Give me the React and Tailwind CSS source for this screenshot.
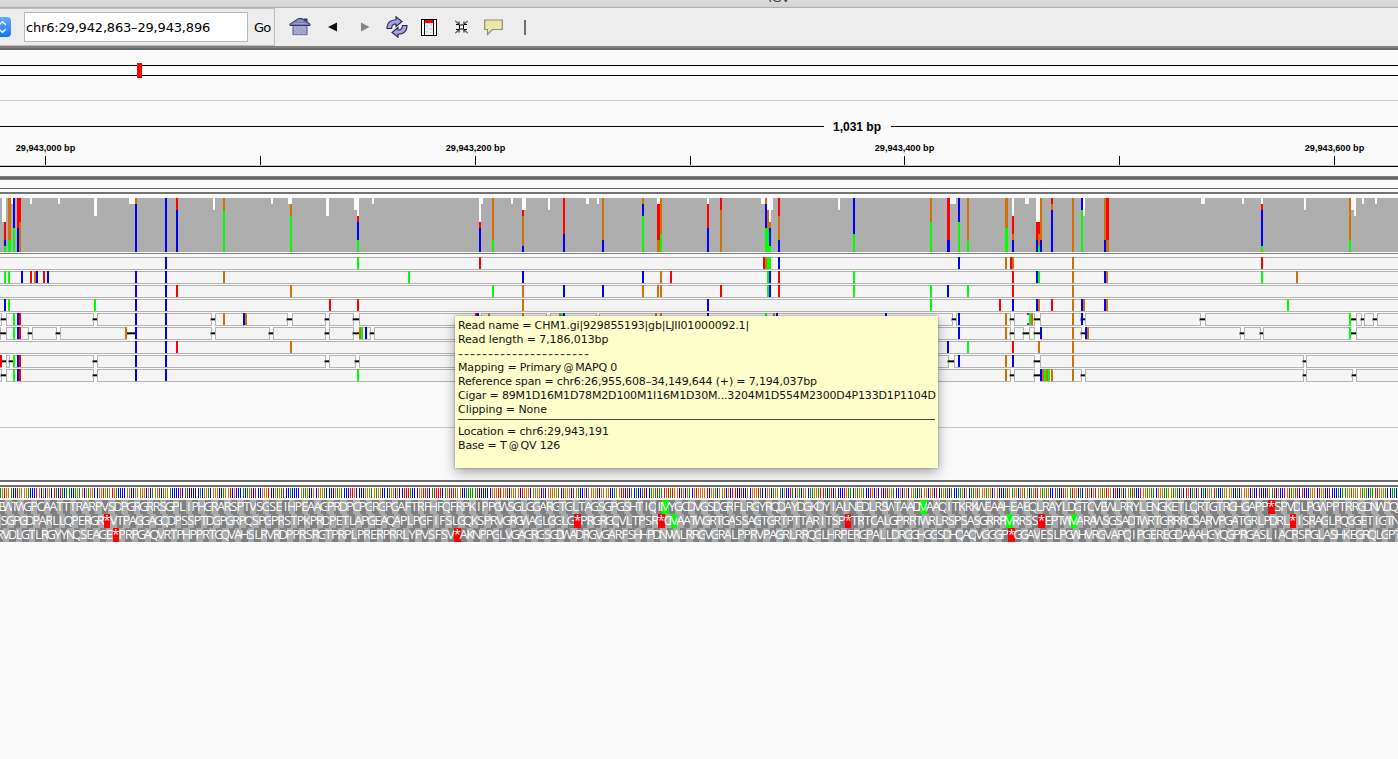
import React from "react";

const WIDTH = 1398;
const BP = 2.148;
const ORIGIN = -3.45;

const A = "#00ff00";
const C = "#0000ff";
const G = "#d17105";
const T = "#ff0000";
const BASE_COLORS = { A: "#009600", C: "#0000ff", G: "#d17105", T: "#ff0000" };

const SEQUENCE = [
  "CGAGTGGACCTGGGGACCCTGCGCGGCTACTACAACCAGAGCGAGGCCGGTGAGTGACCC",
  "CGGCCGGGGGCGCAGGTCAGGACCCCTCATCCCCCACGGACGGGCCAGGTCGCCCACAGT",
  "CTCCGGGTCCGAGATCCACCCCGAAGCCGCGGGACCCCGAGACCCTTGCCCCGGGAGAGG",
  "CCCAGGCGCCTTTACCCGGTTTCATTTTCAGTTTAGGCCAAAAATCCCCCCGGGTTGGTC",
  "GGGGCTGGGCGGGGCTCGGGGGACTGGGCTGACCGCGGGGTCGGGGCCAGGTTCTCACAC",
  "CATCCAGATAATGTATGGCTGCGACGTGGGGTCGGACGGGCGCTTCCTCCGCGGGTACCG",
  "GCAGGACGCCTACGACGGCAAGGATTACATCGCCCTGAACGAGGACCTGCGCTCTTGGAC",
  "CGCGGCGGACATGGCGGCTCAGATCACCAAGCGCAAGTGGGAGGCGGCCCATGAGGCGGA",
  "GCAGTTGAGAGCCTACCTGGATGGCACGTGCGTGGAGTGGCTCCGCAGATACCTGGAGAA",
  "CGGGAAGGAGACGCTGCAGCGCACGGGTACCAGGGGCCACGGGGCGCCTCCCTGATCGCC",
  "TGTAGATCTCCCGGGCTGGCCTCCCACAAGGAGGGGAGACAATTGGGACCAACACTAG",
].join("");

const CODON_ORDER = "TCAG";
const CODON_TABLE = "FFLLSSSSYY**CC*WLLLLPPPPHHQQRRRRIIIMTTTTNNKKSSRRVVVVAAAADDEEGGGG";

function translate(start) {
  const out = [];
  for (let k = start; k + 2 < SEQUENCE.length && ORIGIN + k * BP < WIDTH - 1; k += 3) {
    const [a, b, c] = [0, 1, 2].map((d) => CODON_ORDER.indexOf(SEQUENCE[k + d]));
    out.push(CODON_TABLE[a * 16 + b * 4 + c]);
  }
  return out;
}

// Gaps cut from the top of the coverage profile: [x, width, depth]
const DIPS = [
  [2, 4, 24], [11, 2, 6], [30, 2, 6], [58, 2, 6], [94, 3, 18], [129, 6, 6], [213, 2, 12], [271, 2, 6],
  [288, 4, 6], [326, 3, 18], [354, 3, 12], [357, 2, 18], [372, 2, 6], [479, 2, 24], [481, 2, 6],
  [511, 2, 6], [522, 4, 12], [548, 2, 12], [586, 3, 6], [597, 2, 6], [657, 3, 6], [707, 2, 6],
  [761, 4, 6], [767, 6, 12], [769, 2, 24], [838, 2, 12], [950, 6, 6], [1012, 2, 18], [1025, 4, 6],
  [1036, 4, 24], [1083, 2, 18], [1201, 4, 6], [1242, 2, 6], [1261, 2, 6], [1304, 2, 12],
  [1351, 3, 12], [1354, 2, 18], [1362, 2, 6], [1375, 2, 6],
];

// Stacked allele bars: [x, width, [from, to, colour], ...]
const STACKS = [
  [4, 2, [24, 42, T], [42, 48, C], [48, 54, A]],
  [8, 3, [0, 42, G], [42, 54, A]],
  [13, 2, [0, 30, C], [30, 54, A]],
  [17, 2, [0, 30, T], [30, 54, C]],
  [19, 2, [0, 24, T], [24, 54, G]],
  [135, 2, [0, 6, G], [6, 54, C]],
  [165, 2, [0, 54, C]],
  [176, 2, [0, 12, T], [12, 54, C]],
  [223, 2, [0, 12, G], [12, 54, A]],
  [290, 2, [6, 18, G], [18, 54, A]],
  [357, 2, [18, 24, T], [24, 42, C], [42, 54, A]],
  [479, 2, [24, 30, T], [30, 54, C]],
  [492, 2, [0, 42, G], [42, 54, A]],
  [522, 2, [12, 18, T], [18, 48, G], [48, 54, C]],
  [563, 2, [0, 36, T], [36, 54, C]],
  [602, 2, [0, 42, G], [42, 54, C]],
  [642, 2, [0, 6, G], [6, 18, C], [18, 54, A]],
  [657, 3, [6, 42, T], [42, 54, G]],
  [660, 2, [0, 36, G], [36, 54, A]],
  [707, 2, [6, 30, T], [30, 54, C]],
  [720, 2, [0, 12, T], [12, 54, G]],
  [765, 2, [0, 6, G], [6, 30, C], [30, 54, A]],
  [767, 2, [12, 30, G], [30, 54, A]],
  [769, 2, [24, 30, G], [30, 48, C], [48, 54, A]],
  [778, 2, [0, 18, T], [18, 42, G], [42, 54, C]],
  [853, 2, [0, 36, C], [36, 54, A]],
  [930, 2, [0, 24, G], [24, 54, A]],
  [947, 3, [0, 42, T], [42, 54, C]],
  [958, 2, [0, 24, C], [24, 54, A]],
  [967, 2, [0, 42, G], [42, 54, A]],
  [1005, 3, [0, 30, G], [30, 54, A]],
  [1012, 2, [18, 36, T], [36, 42, G], [42, 54, C]],
  [1036, 2, [24, 42, T], [42, 54, C]],
  [1038, 2, [24, 36, T], [36, 48, G], [48, 54, A]],
  [1040, 2, [0, 42, G], [42, 54, C]],
  [1051, 2, [0, 6, T], [6, 12, G], [12, 54, C]],
  [1072, 2, [0, 54, G]],
  [1081, 2, [0, 12, C], [12, 54, A]],
  [1104, 2, [0, 42, G], [42, 54, C]],
  [1106, 3, [0, 42, T], [42, 54, G]],
  [1261, 2, [6, 12, T], [12, 48, C], [48, 54, A]],
  [1349, 2, [0, 42, G], [42, 54, A]],
];

const READS = [
  { gaps: [], marks: { T: [479, 763, 1010, 1261], C: [165, 778, 958], A: [357, 767, 769], G: [765, 1005, 1012, 1072] } },
  {
    gaps: [],
    marks: { A: [4, 8, 408, 767, 853, 1038, 1261], C: [21, 36, 47, 135, 165, 522, 642, 769, 1036, 1104], T: [30, 43, 670, 778, 1012], G: [34, 223, 660, 1072, 1106, 1296] },
  },
  {
    gaps: [],
    marks: { C: [135, 165, 563, 602, 769, 947], T: [176, 720, 778, 1012], G: [290, 522, 642, 657, 660, 1072], A: [492, 767, 853, 930, 967] },
  },
  {
    gaps: [],
    marks: { C: [4, 135, 165, 707, 1012, 1036, 1081, 1104], A: [8, 94, 930, 1287], T: [329, 357, 999, 1051], G: [522, 1038, 1072, 1083, 1106] },
  },
  {
    gaps: [[2, 6], [94, 97], [212, 215], [288, 292], [326, 329], [354, 359], [477, 481], [547, 550], [597, 599], [953, 956], [1011, 1014], [1035, 1040], [1082, 1085], [1201, 1205], [1351, 1356], [1362, 1364], [1374, 1377]],
    marks: { A: [13, 561, 765, 1029, 1349], T: [19, 475], C: [17, 135, 165, 243, 477, 563, 707, 776, 885, 958, 1081], G: [223, 245, 488, 522, 559, 655, 660, 773, 1005, 1031, 1072] },
    insertion: 1027,
  },
  {
    gaps: [[1, 6], [29, 32], [57, 60], [127, 135], [212, 215], [270, 273], [326, 329], [354, 359], [371, 374], [1011, 1014], [1024, 1029], [1035, 1040], [1082, 1085], [1241, 1244], [1261, 1263], [1351, 1356]],
    marks: { A: [13, 361, 1349], T: [19], C: [17, 135, 165, 365, 958, 1040, 1085], G: [125, 359, 1005, 1072, 1087] },
  },
  { gaps: [], marks: { C: [135, 165, 947], T: [176, 1012], G: [290, 1038, 1072], A: [967] } },
  {
    gaps: [[2, 6], [10, 13], [94, 97], [326, 329], [356, 359], [949, 954], [1035, 1040], [1304, 1306]],
    marks: { T: [0, 19], A: [13], C: [17, 135, 165, 958, 1012], G: [1005, 1072] },
  },
  {
    gaps: [[2, 6], [94, 97], [1011, 1014], [1035, 1040], [1082, 1085], [1304, 1306], [1353, 1356]],
    marks: { A: [13, 357, 1044, 1048], T: [19], C: [17, 135, 165, 1040], G: [1005, 1042, 1046, 1051, 1072] },
  },
];
const MARK_COLORS = { A, C, G, T };

function Coverage() {
  return (
    <svg className="block shrink-0" width={WIDTH} height="59" shapeRendering="crispEdges">
      <rect x="0" y="4" width={WIDTH} height="54" fill="#aeaeae" />
      {DIPS.map(([x, w, d]) => (
        <rect key={`${x}-${d}`} x={x} y="4" width={w} height={d} fill="#fafafa" />
      ))}
      {STACKS.map(([x, w, ...parts]) =>
        parts.map(([from, to, fill]) => (
          <rect key={`${x}-${from}`} x={x} y={4 + from} width={w} height={to - from} fill={fill} />
        ))
      )}
    </svg>
  );
}

function Read({ gaps, marks, insertion }) {
  return (
    <svg className="block shrink-0" width={WIDTH} height="13" shapeRendering="crispEdges">
      <rect x="-1" y="0" width={WIDTH + 2} height="13" fill="#b4b4b4" />
      <rect x="-1" y="1" width={WIDTH + 2} height="11" fill="#f5f5f5" />
      {gaps.map(([a, b]) => (
        <g key={a}>
          <rect x={a - 1} y="0" width={b - a + 2} height="13" fill="#b4b4b4" />
          <rect x={a} y="0" width={b - a} height="13" fill="#fafafa" />
          <rect x={a - 2} y="5" width={b - a + 3} height="3" fill="#a9a9a9" />
          <rect x={a - 1} y="6" width={b - a + 1} height="1" fill="#000" />
          <rect x={a - 1} y="5" width={b - a + 1} height="1" fill="#555" />
        </g>
      ))}
      {Object.entries(marks).map(([base, xs]) =>
        xs.map((x) => <rect key={base + x} x={x} y="0" width="2" height="12" fill={MARK_COLORS[base]} />)
      )}
      {insertion && (
        <g fill="#7a1fe0">
          <rect x={insertion} y="0" width="2" height="2" />
          <rect x={insertion} y="10" width="2" height="2" />
        </g>
      )}
    </svg>
  );
}

function AminoRow({ start }) {
  const width = BP * 3;
  return (
    <svg className="block shrink-0 bg-[#a9a9a9]" width={WIDTH} height="14">
      {translate(start).map((aa, i) => {
        const x = ORIGIN + (start + i * 3) * BP;
        const fill = aa === "*" ? "#ff0000" : aa === "M" ? "#00ff00" : i % 2 ? "#a9a9a9" : "#808080";
        return (
          <g key={i}>
            <rect x={Math.round(x)} y="0" width={Math.round(x + width) - Math.round(x)} height="14" fill={fill} shapeRendering="crispEdges" />
            <text x={x + width / 2} y="11" textAnchor="middle" fill="#fff" fontSize="13" className="font-['Open_Sans',sans-serif]">
              {aa}
            </text>
          </g>
        );
      })}
    </svg>
  );
}

function Ruler() {
  const major = [[45, "29,943,000 bp"], [475, "29,943,200 bp"], [904, "29,943,400 bp"], [1334, "29,943,600 bp"]];
  return (
    <svg className="block shrink-0 font-['Liberation_Sans',sans-serif] font-bold" width={WIDTH} height="75">
      <g shapeRendering="crispEdges">
        <rect x="0" y="25" width="824" height="1" />
        <rect x="891" y="25" width="507" height="1" />
        {[...major.map((m) => m[0]), 260, 690, 1119].map((x) => (
          <rect key={x} x={x} y="55" width="1" height="9" />
        ))}
        <rect x="0" y="64" width={WIDTH} height="1" fill="#c8c8c8" />
        <rect x="0" y="65" width={WIDTH} height="1" />
      </g>
      <text x="857" y="30" textAnchor="middle" fontSize="12">1,031 bp</text>
      {major.map(([x, label]) => (
        <text key={x} x={x + 0.5} y="50" textAnchor="middle" fontSize="9" textLength="59.500" lengthAdjust="spacingAndGlyphs">{label}</text>
      ))}
    </svg>
  );
}

function HomeIcon() {
  return (
    <svg className="block" width="22" height="20" viewBox="0 0 22 20">
      <path d="M14.500 1.500h4v5h-4z" fill="#34365f" />
      <path d="M4 8.500h14V18H4z" fill="#a9a9d6" stroke="#55578c" />
      <path d="M7 10l8 8M5 13l5 5M11 10l6.500 6.500" stroke="#9192c4" />
      <path d="M9.500 1.500L1 7v1.500h20V7L13 1.500z" fill="#7a7cb0" stroke="#34365f" strokeWidth="1" />
      <path d="M5 6.500h12M8 4h6" stroke="#9fa1d2" />
      <path d="M3 19h16" stroke="#fff" />
    </svg>
  );
}

function RefreshIcon() {
  return (
    <svg className="block" width="22" height="22" viewBox="0 0 22 22">
      <g fill="#a3a4dc" stroke="#25264f" strokeWidth="1.100" strokeLinejoin="miter">
        <path d="M1 12.500C0.500 7.500 4.500 3.500 10 3.700V0.800l6 4.700L10 10.500V8C7.500 7.800 5.800 9.500 5.500 12.500z" />
        <path d="M21 9.500c0.500 5-3.500 9-9 8.800v2.900L6 16.500l6-5v2.500c2.500.2 4.200-1.500 4.500-4.500z" />
      </g>
    </svg>
  );
}

function RegionIcon() {
  return (
    <svg className="block" width="16" height="17" shapeRendering="crispEdges">
      <rect width="16" height="17" fill="#000" />
      <rect x="1" y="1" width="14" height="15" fill="#fff" />
      <path d="M3 0h1v17H3zM12 0h1v17h-1z" fill="#000" />
      <rect x="4" y="1" width="8" height="15" fill="#f1eff9" />
      <rect x="4" y="1" width="8" height="3" fill="#ff0000" />
      <path d="M5 6h2v2H5zM9 9h2v2H9zM5 12h2v2H5z" fill="#ccd2f5" />
      <path d="M9 5h2v2H9zM6 9h2v1H6zM9 13h2v1H9z" fill="#f4c9d0" />
    </svg>
  );
}

function ShrinkIcon() {
  return (
    <svg className="block" width="13" height="14" viewBox="0 0 13 14" fill="none" stroke="#000" strokeWidth="1">
      <path d="M4.500 5h4v4h-4z" fill="#fff" />
      <path d="M0 .5l4 4M1 4.500h3V1.500M13 .5l-4 4M12 4.500H9V1.500M0 13.500l4-4M1 9.500h3v3M13 13.500l-4-4M12 9.500H9v3" />
    </svg>
  );
}

function Toolbar() {
  return (
    <div className="flex h-[38px] shrink-0 bg-[#ededed]">
      <div className="flex h-[38px] w-[275px] items-center border-y border-r border-[#bdbdbd]">
        <div className="flex h-5 w-[11px] shrink-0 items-center rounded-r bg-gradient-to-b from-[#62abf8] to-[#0f74f8]">
          <svg width="7" height="14" viewBox="0 0 7 14" fill="none" stroke="#fff" strokeWidth="1.500">
            <path d="M-1 5l3.500-3.200L6 5M-1 9l3.500 3.200L6 9" />
          </svg>
        </div>
        <div className="ml-[13px] flex h-[30px] w-[224px] shrink-0 items-center border border-[#b8b8b8] bg-white pt-px pl-px text-[13px] tracking-[-0.18px] whitespace-pre">
          chr6:29,942,863–29,943,896
        </div>
        <div className="mt-px ml-[6px] text-[13px] tracking-[-0.8px]">Go</div>
      </div>
      <div className="flex h-[38px] items-center">
        <div className="ml-[14px]"><HomeIcon /></div>
        <svg className="ml-[17px] block" width="10" height="10"><path d="M0 5l9-4.500v9z" fill="#111" /></svg>
        <svg className="ml-[23px] block" width="9" height="10"><path d="M8.500 5L0 .5v9z" fill="#858585" /></svg>
        <div className="ml-[16px]"><RefreshIcon /></div>
        <div className="ml-[13px]"><RegionIcon /></div>
        <div className="ml-[18px]"><ShrinkIcon /></div>
        <svg className="mt-px ml-[16px] block" width="19" height="17">
          <path d="M.7 1h17.600v9.500H8.500L3.500 15.500v-5H.7z" fill="#ede7a4" stroke="#8d8d80" strokeWidth="1.200" />
        </svg>
        <div className="ml-[21px] h-[15px] w-[1.500px] bg-[#6e6e6e]" />
      </div>
    </div>
  );
}

function At() {
  return <span className="ml-[-1px] mr-[-1.5px] text-[10px]">@</span>;
}

function Tooltip() {
  return (
    <div className="absolute top-[316px] left-[455px] h-[152px] w-[483px] bg-[#ffffcc] px-[3px] pt-[3px] text-[11px] leading-[14px] tracking-[-0.16px] whitespace-pre text-[#111] shadow-[0_4px_12px_rgba(0,0,0,0.35),0_0_2px_rgba(0,0,0,0.4)]">
      <div>Read name = CHM1.gi|929855193|gb|LJII01000092.1|</div>
      <div className="tracking-[-0.08px]">Read length = 7,186,013bp</div>
      <div className="h-[14px] text-[14px] tracking-[0.95px] text-[#444]">----------------------</div>
      <div>Mapping = Primary <At /> MAPQ 0</div>
      <div>Reference span = chr6:26,955,608–34,149,644 (+) = 7,194,037bp</div>
      <div>Cigar = 89M1D16M1D78M2D100M1I16M1D30M...3204M1D554M2300D4P133D1P1104D</div>
      <div className="tracking-[-0.05px]">Clipping = None</div>
      <div className="mt-[2px] mb-[5px] h-px bg-[#444]" />
      <div className="tracking-[-0.12px]">Location = chr6:29,943,191</div>
      <div>Base = T <At /> QV 126</div>
    </div>
  );
}

export default function App() {
  return (
    <div className="relative flex h-[759px] w-[1398px] flex-col overflow-hidden bg-[#fafafa] font-['DejaVu_Sans',sans-serif] text-black">
      <div className="flex h-2 shrink-0 items-end justify-center overflow-hidden border-b border-[#b0b0b0] bg-gradient-to-b from-[#dcdcdc] to-[#d2d2d2] pl-[160px]">
        <span className="mb-[3px] text-[13px] leading-[13px] tracking-[-0.5px] text-[#444]">IGV</span>
      </div>
      <Toolbar />
      <div className="h-1 shrink-0 border-y-2 border-t-[#808080] border-b-[#6a6a6a]" />
      <svg className="block shrink-0" width={WIDTH} height="51" shapeRendering="crispEdges">
        <rect x="0" y="15" width={WIDTH} height="11" fill="#000" />
        <rect x="0" y="16" width={WIDTH} height="9" fill="#fff" />
        <rect x="137" y="13" width="5" height="15" fill="#ff0000" />
        <rect x="0" y="50" width={WIDTH} height="1" fill="#c9c9d3" />
      </svg>
      <Ruler />
      <div className="h-1 shrink-0 border-y border-[#808080] bg-[#666]" />
      <div className="h-[9px] shrink-0 border-b border-[#666]" />
      <div className="h-[5px] shrink-0 border-b-2 border-[#737373]" />
      <Coverage />
      <div className="h-px shrink-0 bg-[#808080]" />
      <div className="flex h-[174px] shrink-0 flex-col gap-px border-b border-[#c9c9c9] pt-[3px]">
        {READS.map((r, i) => (
          <Read key={i} {...r} />
        ))}
      </div>
      <div className="h-[54px] shrink-0 border-b-2 border-[#6c6c6c]" />
      <div className="h-[5px] shrink-0 border-b-2 border-[#6c6c6c] bg-white" />
      <svg className="block shrink-0 bg-white" width={WIDTH} height="13" shapeRendering="crispEdges">
        {[...SEQUENCE].map((b, i) => (
          <rect key={i} x={Math.floor(ORIGIN - 0.46 + i * BP)} y="1" width="1" height="10" fill={BASE_COLORS[b]} />
        ))}
      </svg>
      <AminoRow start={1} />
      <AminoRow start={2} />
      <AminoRow start={0} />
      <Tooltip />
    </div>
  );
}
